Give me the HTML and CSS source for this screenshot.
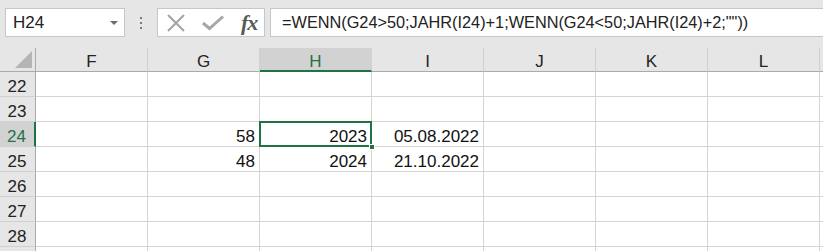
FILE: index.html
```html
<!DOCTYPE html>
<html>
<head>
<meta charset="utf-8">
<link rel="stylesheet" href="styles.css">
</head>
<body>
<div class="toolbar">
  <div class="namebox">
    <span class="name">H24</span>
    <span class="caret"></span>
  </div>
  <div class="grip"><i></i><i></i><i></i></div>
  <div class="fxbox">
    <svg class="ico" width="20" height="20" viewBox="0 0 20 20"><path d="M2 2 L18 18 M18 2 L2 18" stroke="#a6a6a6" stroke-width="2.2" fill="none"/></svg>
    <svg class="ico" width="22" height="16" viewBox="0 0 22 16"><path d="M1 8 L7.5 13.5 L21 1.5" stroke="#a6a6a6" stroke-width="3" fill="none"/></svg>
    <span class="fx">fx</span>
  </div>
  <div class="formula">=WENN(G24&gt;50;JAHR(I24)+1;WENN(G24&lt;50;JAHR(I24)+2;""))</div>
</div>
<div class="sheet">
  <div class="hd corner"><span class="tri"></span></div>
  <div class="hd col">F</div>
  <div class="hd col">G</div>
  <div class="hd col active">H</div>
  <div class="hd col">I</div>
  <div class="hd col">J</div>
  <div class="hd col">K</div>
  <div class="hd col">L</div>
  <div class="hd col"></div>

  <div class="hd row">22</div>
  <div class="c"></div><div class="c"></div><div class="c"></div><div class="c"></div><div class="c"></div><div class="c"></div><div class="c"></div><div class="c"></div>

  <div class="hd row">23</div>
  <div class="c"></div><div class="c"></div><div class="c"></div><div class="c"></div><div class="c"></div><div class="c"></div><div class="c"></div><div class="c"></div>

  <div class="hd row active">24</div>
  <div class="c"></div><div class="c num">58</div><div class="c num sel">2023<span class="handle"></span></div><div class="c num">05.08.2022</div><div class="c"></div><div class="c"></div><div class="c"></div><div class="c"></div>

  <div class="hd row">25</div>
  <div class="c"></div><div class="c num">48</div><div class="c num">2024</div><div class="c num">21.10.2022</div><div class="c"></div><div class="c"></div><div class="c"></div><div class="c"></div>

  <div class="hd row">26</div>
  <div class="c"></div><div class="c"></div><div class="c"></div><div class="c"></div><div class="c"></div><div class="c"></div><div class="c"></div><div class="c"></div>

  <div class="hd row">27</div>
  <div class="c"></div><div class="c"></div><div class="c"></div><div class="c"></div><div class="c"></div><div class="c"></div><div class="c"></div><div class="c"></div>

  <div class="hd row">28</div>
  <div class="c"></div><div class="c"></div><div class="c"></div><div class="c"></div><div class="c"></div><div class="c"></div><div class="c"></div><div class="c"></div>

  <div class="hd row last"></div>
  <div class="c last"></div><div class="c last"></div><div class="c last"></div><div class="c last"></div><div class="c last"></div><div class="c last"></div><div class="c last"></div><div class="c last"></div>
</div>
</body>
</html>
```

FILE: styles.css
```css
* { box-sizing: border-box; }
html, body {
  margin: 0;
  padding: 0;
  width: 823px;
  height: 251px;
  overflow: hidden;
  background: #ffffff;
  font-family: "Liberation Sans", Arial, sans-serif;
  color: #222222;
}
.toolbar {
  height: 48px;
  background: #e6e6e6;
  display: flex;
  align-items: flex-start;
  padding: 8px 0 0 5px;
}
.namebox {
  width: 120px;
  height: 29px;
  background: #ffffff;
  border: 1px solid #c6c6c6;
  display: flex;
  align-items: center;
  justify-content: space-between;
  padding: 0 6px 0 7px;
}
.name {
  font-size: 17px;
  color: #222222;
}
.caret {
  width: 0;
  height: 0;
  border-left: 4px solid transparent;
  border-right: 4px solid transparent;
  border-top: 4px solid #6b6b6b;
}
.grip {
  width: 32px;
  height: 29px;
  display: flex;
  flex-direction: column;
  align-items: center;
  justify-content: center;
  gap: 3px;
}
.grip i {
  display: block;
  width: 2px;
  height: 2px;
  background: #7a7a7a;
}
.fxbox {
  width: 108px;
  height: 29px;
  background: #ffffff;
  border: 1px solid #c6c6c6;
  display: flex;
  align-items: center;
  padding: 0 0 0 8px;
  gap: 16px;
}
.ico { display: block; }
.fx {
  font-family: "Liberation Serif", "Times New Roman", serif;
  font-style: italic;
  font-weight: bold;
  font-size: 22px;
  color: #595959;
  margin-left: 1px;
  letter-spacing: -1px;
}
.formula {
  margin-left: 5px;
  flex: 1;
  height: 29px;
  background: #ffffff;
  border: 1px solid #c6c6c6;
  border-right: none;
  font-size: 16.3px;
  line-height: 27px;
  padding-left: 11px;
  color: #222222;
  white-space: nowrap;
}
.sheet {
  display: grid;
  grid-template-columns: 36px repeat(7, 112px) 1fr;
  grid-template-rows: 24px repeat(7, 25px) 4px;
}
.hd {
  background: #e6e6e6;
  font-size: 17px;
  color: #222222;
  display: flex;
  justify-content: center;
  line-height: 19px;
}
.corner {
  position: relative;
  border-right: 1px solid #ababab;
  border-bottom: 1px solid #ababab;
}
.tri {
  position: absolute;
  right: 3px;
  bottom: 3px;
  width: 0;
  height: 0;
  border-left: 17px solid transparent;
  border-bottom: 17px solid #b5b5b5;
}
.col {
  border-right: 1px solid #d0d0d0;
  border-bottom: 1px solid #ababab;
  padding-top: 4px;
}
.col.active {
  background: #d2d2d2;
  color: #217346;
  border-bottom: 2px solid #217346;
}
.row {
  border-right: 1px solid #ababab;
  border-bottom: 1px solid #d0d0d0;
  padding-right: 1px;
  padding-top: 5px;
}
.row.active {
  background: #d2d2d2;
  color: #217346;
  border-right: 2px solid #217346;
}
.c {
  border-right: 1px solid #d4d4d4;
  border-bottom: 1px solid #d4d4d4;
  font-size: 17px;
  line-height: 19px;
  padding: 5px 4px 0 4px;
  color: #111111;
  white-space: nowrap;
}
.last, .row.last { padding: 0; border-bottom: none; }
.num { text-align: right; }
.sel {
  position: relative;
}
.sel::after {
  content: "";
  position: absolute;
  left: -1px;
  top: -1px;
  right: -1px;
  bottom: -1px;
  border: 2px solid #217346;
}
.handle {
  position: absolute;
  right: -4px;
  bottom: -4px;
  width: 6px;
  height: 6px;
  background: #217346;
  border: 1px solid #ffffff;
  z-index: 2;
}
```
